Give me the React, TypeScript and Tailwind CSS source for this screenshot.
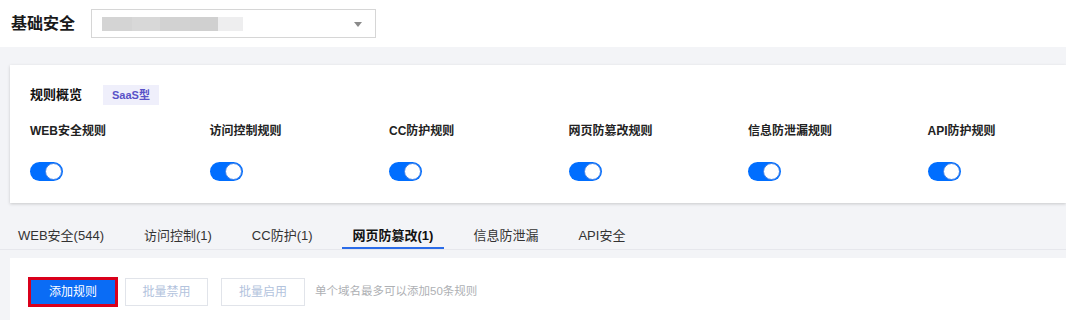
import React from "react";

const font = { fontFamily: '"Liberation Sans", "Noto Sans CJK SC", sans-serif' };

function Toggle() {
  return (
    <div className="relative w-[33px] h-[19px] rounded-full bg-[#006eff]">
      <div className="absolute right-[1px] top-[1px] w-[17px] h-[17px] rounded-full bg-white border border-[#3d7fe8]" />
    </div>
  );
}

const rules = ["WEB安全规则", "访问控制规则", "CC防护规则", "网页防篡改规则", "信息防泄漏规则", "API防护规则"];
const tabs = ["WEB安全(544)", "访问控制(1)", "CC防护(1)", "网页防篡改(1)", "信息防泄漏", "API安全"];

export default function App() {
  return (
    <div className="w-[1066px] h-[320px] overflow-hidden bg-[#f3f4f7] flex flex-col" style={font}>
      <div className="h-[47px] shrink-0 bg-white flex items-center pl-[11px]">
        <div className="text-[16px] font-bold text-[#1a1a1a] w-[80px]">基础安全</div>
        <div className="relative w-[285px] h-[29px] border border-[#d6d6d6] bg-white flex items-center pl-[10px]">
          <div className="flex h-[14px] items-stretch">
            <div className="w-[30px] bg-[#d4d4d4]" />
            <div className="w-[28px] bg-[#d8d8d8]" />
            <div className="w-[30px] bg-[#d2d2d2]" />
            <div className="w-[28px] bg-[#d0d0d0]" />
            <div className="w-[25px] bg-[#eeeeef]" />
          </div>
          <svg className="absolute right-[13px] top-[12px]" width="8" height="5" viewBox="0 0 8 5">
            <path d="M0 0 L8 0 L4 5 Z" fill="#8a8a8a" />
          </svg>
        </div>
      </div>

      <div className="mt-[18px] ml-[10px] h-[138px] shrink-0 bg-white shadow-[0_1px_3px_rgba(0,0,0,0.18)] pl-[20px] pt-[20px]">
        <div className="flex items-center h-[20px]">
          <span className="text-[13px] font-bold text-[#111]">规则概览</span>
          <span className="ml-[21px] h-[20px] px-[9px] flex items-center bg-[#efeffb] text-[#5a52c8] text-[11px] font-bold">SaaS型</span>
        </div>
        <div className="flex mt-[18px]">
          {rules.map((r) => (
            <div key={r} className="w-[179.5px] shrink-0">
              <div className="text-[12px] font-bold text-[#222] h-[16px] leading-[16px]">{r}</div>
              <div className="mt-[23px]">
                <Toggle />
              </div>
            </div>
          ))}
        </div>
      </div>

      <div className="h-[47px] shrink-0 flex items-end border-b border-[#e6e7ec] pl-[7px] gap-[18px]">
        {tabs.map((t, i) => (
          <div
            key={t}
            className={
              "px-[11px] pb-[2px] text-[13px] border-b-2 " +
              (i === 3 ? "border-[#2a6be8] text-[#111] font-bold" : "border-transparent text-[#333]")
            }
          >
            {t}
          </div>
        ))}
      </div>

      <div className="mt-[8px] ml-[10px] flex-1 bg-white flex items-start pl-[18px] pt-[19px]">
        <div className="w-[90px] h-[30px] border-[3px] border-[#d9001b] bg-[#0a6cf5] flex items-center justify-center text-white text-[12px]">
          添加规则
        </div>
        <div className="ml-[7px] mt-[1px] w-[83px] h-[28px] border border-[#e1e4ea] flex items-center justify-center text-[#b3c3dd] text-[12px]">
          批量禁用
        </div>
        <div className="ml-[13px] mt-[1px] w-[84px] h-[28px] border border-[#e1e4ea] flex items-center justify-center text-[#b3c3dd] text-[12px]">
          批量启用
        </div>
        <div className="ml-[10px] h-[30px] flex items-center text-[11.5px] text-[#aeb0b4]">单个域名最多可以添加50条规则</div>
      </div>
    </div>
  );
}
